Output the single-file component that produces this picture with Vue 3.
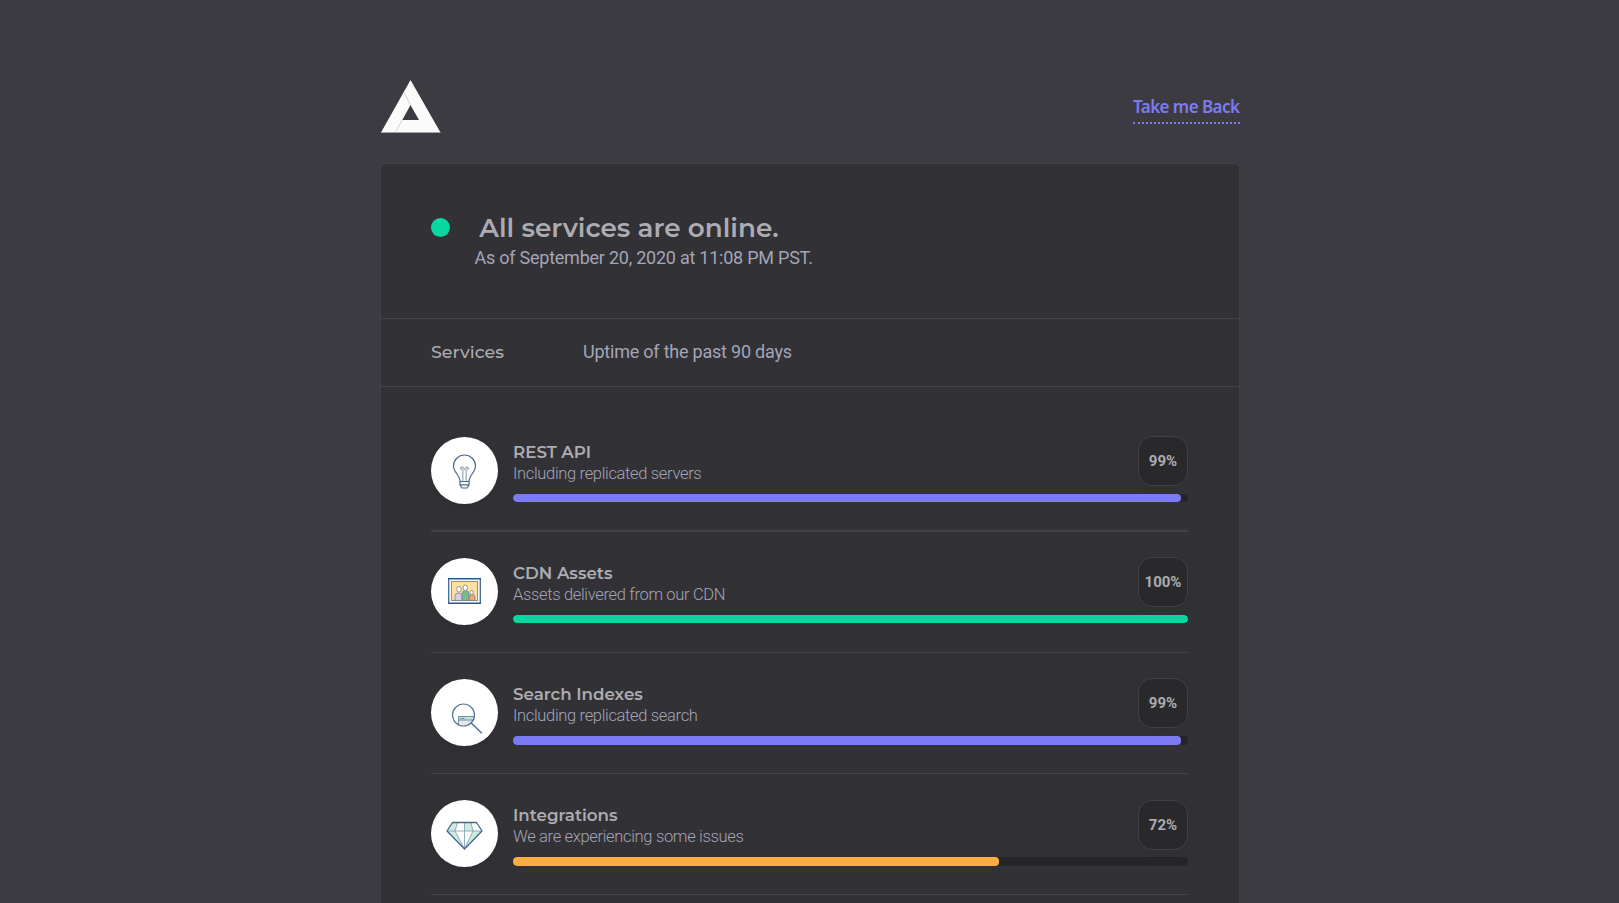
<script setup>
const services = [
  { icon: 'bulb', name: 'REST API', note: 'Including replicated servers', value: 99, color: '#7b7bf3' },
  { icon: 'photo', name: 'CDN Assets', note: 'Assets delivered from our CDN', value: 100, color: '#08d7a1' },
  { icon: 'search', name: 'Search Indexes', note: 'Including replicated search', value: 99, color: '#7b7bf3' },
  { icon: 'gem', name: 'Integrations', note: 'We are experiencing some issues', value: 72, color: '#faad42' },
]
</script>

<template>
  <div class="page">
    <div class="container">
      <header class="top">
        <svg class="logo" width="60" height="54" viewBox="0 0 60 54">
          <path d="M29.5 0 59.5 52.5H0zM29.5 25 21.3 40H38z" fill="#fbfbfb" fill-rule="evenodd" />
          <path d="M0 52.5H59.5" stroke="#a5a5a8" stroke-width="1" />
          <path d="M22.8 12.2 29.5 25M21.3 40 14.4 52" stroke="#c9c9cb" stroke-width=".8" />
        </svg>
        <a class="back">Take me Back</a>
      </header>

      <main class="card">
        <section class="summary">
          <span class="dot"></span>
          <div class="status">
            <h1>All services are online.</h1>
            <p>As of September 20, 2020 at 11:08 PM PST.</p>
          </div>
        </section>
        <section class="labels">
          <span class="services-label">Services</span>
          <span class="uptime-label">Uptime of the past 90 days</span>
        </section>
        <section class="list">
          <article v-for="s in services" :key="s.name" class="row">
            <div class="circle">
              <svg v-if="s.icon === 'bulb'" width="67" height="67" viewBox="0 0 67 67" fill="none" stroke="#4c6b8e" stroke-width="1.2">
                <path d="M29 44.5C29 38 22.5 35.5 22.5 29a11 11 0 0 1 22 0c0 6.500-6.500 9-6.500 15.500z" />
                <path d="M29 44.500v3.500l2 3h5l2-3v-3.500M29.500 47.800h8" />
                <path d="M31.800 44V33.500l-2.300-2.500 1.800-1.200 2.200 2.700 2.200-2.700 1.800 1.200-2.300 2.500V44" stroke="#a1afbd" stroke-width="1.300" />
              </svg>
              <svg v-else-if="s.icon === 'photo'" width="67" height="67" viewBox="0 0 67 67">
                <rect x="17.700" y="20.700" width="31.600" height="24.600" fill="#f4f8fb" stroke="#47698e" stroke-width="1.300" />
                <path d="M17 45.300H50M17 20.700H50" stroke="#25507c" stroke-width="1" />
                <rect x="20.500" y="23.500" width="26" height="19" fill="#fee0a0" stroke="#8292a0" />
                <g stroke="#76848b" stroke-width=".8">
                  <path d="M24 42.500V38q0-3 3.500-3t3.500 3v4.500z" fill="#dacbf4" />
                  <path d="M31 42.500V36q0-3.500 3.500-3.500T38 36v6.500z" fill="#79bd89" />
                  <path d="M38 42.500V39q0-2.500 3-2.500t3 2.500v3.500z" fill="#fba06f" />
                  <ellipse cx="28" cy="31.300" rx="2.300" ry="2.800" fill="#fff" />
                  <ellipse cx="34.300" cy="29.700" rx="2.200" ry="2.800" fill="#fff" />
                  <ellipse cx="40.700" cy="34.500" rx="1.600" ry="2" fill="#fff" />
                </g>
              </svg>
              <svg v-else-if="s.icon === 'search'" width="67" height="67" viewBox="0 0 67 67" fill="none">
                <path d="M27.500 37.500H43V41l-3 3.500-5 2.500-7.500-2z" fill="#e3e6e9" />
                <path d="M27.500 37.500H43V41H28" fill="#c0e6dc" stroke="#688299" stroke-width=".9" />
                <path d="M29.500 39.300h4M27.500 37.500v8" stroke="#688299" stroke-width=".9" />
                <circle cx="32.500" cy="36" r="11" stroke="#587797" stroke-width="1.200" />
                <path d="m40 43.700 10.800 10.600" stroke="#466b92" stroke-width="1.400" />
              </svg>
              <svg v-else width="67" height="67" viewBox="0 0 67 67" fill="none" stroke-linejoin="round">
                <path d="M21.500 22.500h5L24 31h-8zM33.500 22.500H40l2 8.500h-8.500zM16 31h8l9.500 18zM42 31h9L33.500 49z" fill="#d0eae1" />
                <path d="M16 31h35M26.500 22.500 24 31l9.500 18L42 31l-2-8.500M33.500 22.500V49" stroke="#799aab" stroke-width=".8" />
                <path d="M21.500 22.500H45.500L51 31 33.500 49 16 31z" stroke="#41698c" stroke-width="1.300" />
              </svg>
            </div>
            <div class="info">
              <h2>{{ s.name }}</h2>
              <p>{{ s.note }}</p>
              <div class="track"><div class="fill" :style="{ width: s.value + '%', background: s.color }"></div></div>
            </div>
            <div class="badge">{{ s.value }}%</div>
          </article>
        </section>
      </main>
    </div>
  </div>
</template>

<style>
body { margin: 0; background: #3d3b42; overflow: hidden; }
</style>

<style scoped>
* { box-sizing: border-box; }
h1, h2, p { margin: 0; white-space: nowrap; }
.page { height: 903px; overflow: hidden; background: #3d3b42; color: #acacb2; font-family: Roboto, sans-serif; }
.container { width: 860px; margin-left: 380px; }
.top { height: 163px; padding-top: 80px; display: flex; justify-content: space-between; align-items: flex-start; }
.logo { display: block; margin: 0.3px 0 0 1.3px; }
.back { margin-top: 13px; height: 31px; width: 107px; font: 600 17px/27px "Noto Sans", "Open Sans", sans-serif; letter-spacing: -0.55px; color: #7b7bf3; border-bottom: 2px dotted #7b7bf3; white-space: nowrap; }
.card { height: 800px; border: 1px solid #414046; border-radius: 7px; background: #323135; }
.summary { height: 155px; padding: 54px 0 0 50px; display: flex; border-bottom: 1px solid #434248; }
.dot { width: 19px; height: 19px; border-radius: 50%; background: #08d7a1; }
.status { margin: -6px 0 0 24.5px; }
h1 { margin-left: 4.8px; font: 600 26.25px/33px Montserrat, Inter, sans-serif; }
.status p { font-size: 18px; line-height: 26px; letter-spacing: -0.24px; color: #a4a5b8; }
.labels { height: 68px; padding-left: 50px; display: flex; align-items: center; border-bottom: 1px solid #434248; }
.services-label { width: 152px; margin-top: -2px; font: 500 17.5px/24px Montserrat, Inter, sans-serif; }
.uptime-label { margin-top: -1px; font-size: 18px; line-height: 24px; letter-spacing: -0.22px; color: #a4a5b8; }
.list { padding: 23.5px 51px 0 50px; }
.row { position: relative; height: 121.1px; display: flex; align-items: flex-start; }
.row::after { content: ""; position: absolute; left: 0; right: 0; bottom: 0; height: 1.2px; background: #424147; }
.circle { width: 67px; height: 67px; margin: 26.5px 15px 0 0; border-radius: 50%; background: #fff; box-shadow: 0 4px 10px rgba(0, 0, 0, .08); flex: none; }
.circle svg { display: block; }
.info { flex: 1; padding-top: 31.5px; }
h2 { font: 600 16.7px/21px Montserrat, Inter, sans-serif; }
.info p { font-size: 16.5px; font-weight: 300; line-height: 22px; letter-spacing: -0.33px; color: #a4a5b8; }
.track { height: 8.4px; margin-top: 9px; border-radius: 4px; background: #252528; overflow: hidden; }
.fill { height: 100%; border-radius: 4px; }
.badge { position: absolute; right: 0; top: 25.8px; width: 50px; height: 50px; border: 1px solid #414046; border-radius: 14px; background: #29292c; box-shadow: 0 2px 8px rgba(0, 0, 0, .07); font-size: 15px; font-weight: 700; line-height: 48px; text-align: center; }
</style>
